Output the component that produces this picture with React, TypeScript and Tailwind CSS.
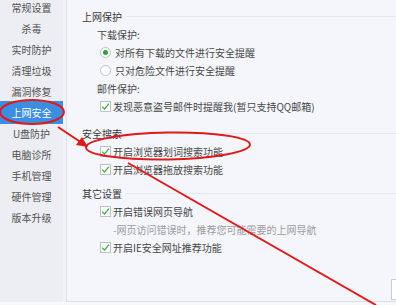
import React from "react";

const menu = ["常规设置", "杀毒", "实时防护", "清理垃圾", "漏洞修复", "上网安全", "U盘防护", "电脑诊所", "手机管理", "硬件管理", "版本升级"];

function Check() {
  return (
    <span className="w-[11px] h-[11px] shrink-0 bg-white border border-[#bcc1c9] flex items-center justify-center">
      <svg width="9" height="9" viewBox="0 0 9 9">
        <path d="M1.2 4.6 L3.5 7 L8 1.6" fill="none" stroke="#45ad47" strokeWidth="1.3" />
      </svg>
    </span>
  );
}

function Radio({ on }: { on?: boolean }) {
  return (
    <span className="w-[11px] h-[11px] shrink-0 rounded-full bg-white border border-[#bcc1c9] flex items-center justify-center">
      {on && <span className="w-[5px] h-[5px] rounded-full bg-[#25a53f]" />}
    </span>
  );
}

function Heading({ children }: { children: React.ReactNode }) {
  return (
    <div className="h-[18px] flex items-center gap-1 text-[#383838]">
      <span>{children}</span>
      <span className="flex-1 h-px bg-[#e4e8ef]" />
    </div>
  );
}

function CheckRow({ children }: { children: React.ReactNode }) {
  return (
    <div className="h-[18px] flex items-center gap-[2px] ml-[18px]">
      <Check />
      <span>{children}</span>
    </div>
  );
}

function RadioRow({ on, children }: { on?: boolean; children: React.ReactNode }) {
  return (
    <div className="h-[18px] flex items-center gap-[4px] ml-[18px]">
      <Radio on={on} />
      <span>{children}</span>
    </div>
  );
}

export default function App() {
  return (
    <div
      className="relative w-[396px] h-[305px] overflow-hidden bg-[#f7f8fb] text-[10px] text-[#474747]"
      style={{ fontFamily: '"Noto Sans CJK SC", "Noto Sans", sans-serif' }}
    >
      <div className="flex h-[302px]">
        <nav className="w-[63px] bg-[#eceef3] flex flex-col -mt-[3px]">
          {menu.map((m) =>
            m === "上网安全" ? (
              <div key={m} className="h-[23px] -my-[1px] leading-[23px] text-center bg-[#3d8de0] text-white">
                {m}
              </div>
            ) : (
              <div key={m} className="h-[21px] leading-[21px] text-center text-[#525252]">
                {m}
              </div>
            )
          )}
        </nav>
        <div className="w-[4px] bg-[#f1f3f7] border-r border-[#dde1e8]" />
        <main className="flex-1 bg-[#f4f6fb] border-b border-[#d9dde4] pl-[15px] pt-[7px] flex flex-col">
          <Heading>上网保护</Heading>
          <div className="h-[18px] flex items-center ml-[15px]">下载保护:</div>
          <RadioRow on>对所有下载的文件进行安全提醒</RadioRow>
          <RadioRow>只对危险文件进行安全提醒</RadioRow>
          <div className="h-[18px] flex items-center ml-[15px]">邮件保护:</div>
          <CheckRow>发现恶意盗号邮件时提醒我(暂只支持QQ邮箱)</CheckRow>

          <div className="mt-[9px]">
            <Heading>安全搜索</Heading>
          </div>
          <CheckRow>开启浏览器划词搜索功能</CheckRow>
          <CheckRow>开启浏览器拖放搜索功能</CheckRow>

          <div className="mt-[6px]">
            <Heading>其它设置</Heading>
          </div>
          <CheckRow>开启错误网页导航</CheckRow>
          <div className="h-[18px] flex items-center ml-[31px] text-[#9c9c9c]">-网页访问错误时，推荐您可能需要的上网导航</div>
          <CheckRow>开启IE安全网址推荐功能</CheckRow>
        </main>
      </div>

      <div className="absolute left-[391px] top-[279px] w-[20px] h-[21px] bg-white border border-[#c9cdd4]" />

      <svg className="absolute inset-0 pointer-events-none" width="396" height="305" viewBox="0 0 396 305">
        <ellipse cx="32" cy="112" rx="32" ry="12" fill="none" stroke="#e01a1a" strokeWidth="2" />
        <line x1="58" y1="127" x2="82" y2="143" stroke="#e01a1a" strokeWidth="2" />
        <polygon points="88,147 76,145 82,137" fill="#e01a1a" />
        <ellipse cx="168" cy="146" rx="82" ry="13.5" fill="none" stroke="#e01a1a" strokeWidth="2" transform="rotate(-1 168 146)" />
        <line x1="128" y1="163" x2="376" y2="305" stroke="#e01a1a" strokeWidth="2" />
      </svg>
    </div>
  );
}
